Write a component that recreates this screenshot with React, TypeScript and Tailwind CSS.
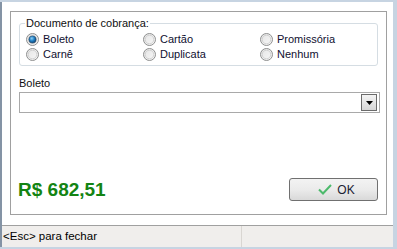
import React from 'react';

const options = [
  { label: 'Boleto', checked: true },
  { label: 'Cartão', checked: false },
  { label: 'Promissória', checked: false },
  { label: 'Carnê', checked: false },
  { label: 'Duplicata', checked: false },
  { label: 'Nenhum', checked: false },
];

function Radio({ checked }: { checked: boolean }) {
  return (
    <svg width="13" height="13" viewBox="0 0 13 13" className="shrink-0">
      <defs>
        <linearGradient id="rb" x1="0" y1="0" x2="1" y2="1">
          <stop offset="0" stopColor="#e4e4e4" />
          <stop offset="1" stopColor="#f8f8f8" />
        </linearGradient>
        <radialGradient id="rc" cx="0.4" cy="0.35" r="0.7">
          <stop offset="0" stopColor="#8fd0f5" />
          <stop offset="0.5" stopColor="#1f7fc4" />
          <stop offset="1" stopColor="#0b3f70" />
        </radialGradient>
      </defs>
      <circle cx="6.5" cy="6.5" r="6" fill="url(#rb)" stroke="#8e8f8f" strokeWidth="1" />
      <circle cx="6.5" cy="6.5" r="4.3" fill="none" stroke="#c9c9c9" strokeWidth="0.8" />
      {checked && <circle cx="6.5" cy="6.5" r="3.6" fill="url(#rc)" stroke="#1c3f61" strokeWidth="0.6" />}
    </svg>
  );
}

export default function App() {
  return (
    <div className="w-[397px] h-[249px] bg-[#c7d4e2] pt-[2px] pr-[4px] pb-[2px] flex flex-col font-['Liberation_Sans',Arial,sans-serif] text-[11px] text-black">
      <div className="flex-1 flex flex-col bg-white border-l-2 border-[#8493a5]">
        {/* main area */}
        <div className="px-[8px] pt-[9px] pb-[10px]">
          <div className="h-[204px] w-[377px] border border-[#a0a0a0] flex flex-col px-[8px]">
            <fieldset className="mt-[5px] border border-[#d5dde3] rounded-[3px] pb-[3px]">
              <legend className="ml-[5px] px-[1px] leading-[13px] text-[#101010]">Documento de cobrança:</legend>
              <div className="grid grid-cols-[117px_117px_1fr] pl-[6px] pt-[2px]">
                {options.map((o) => (
                  <label key={o.label} className="flex items-center gap-[4px] h-[15px] leading-[13px] text-[#101030]">
                    <Radio checked={o.checked} />
                    <span>{o.label}</span>
                  </label>
                ))}
              </div>
            </fieldset>

            <div className="mt-[11px] leading-[13px] text-[#101010]">Boleto</div>
            <div className="mt-[2px] h-[21px] w-[361px] border border-[#a9a9a9] flex items-center justify-end pr-[2px]">
              <div className="w-[16px] h-[17px] border border-[#6b6b6b] bg-gradient-to-b from-[#f4f4f4] to-[#d6d6d6] flex items-center justify-center">
                <svg width="7" height="4" viewBox="0 0 7 4">
                  <path d="M0 0h7L3.5 4z" fill="#000" />
                </svg>
              </div>
            </div>

            <div className="mt-auto mb-[13px] flex items-center justify-between">
              <span className="-ml-px text-[19px] font-bold text-[#138413] leading-none">R$ 682,51</span>
              <button className="w-[89px] h-[23px] rounded-[3px] border border-[#707070] bg-gradient-to-b from-[#f3f3f3] via-[#ebebeb] to-[#d9d9d9] flex items-center justify-center gap-[5px] pl-[6px]">
                <svg width="14" height="11" viewBox="0 0 14 11">
                  <path d="M1 5.5l4 4L13 1" fill="none" stroke="#4dba6c" strokeWidth="2" />
                </svg>
                <span className="text-[12px] text-[#1b2133]">OK</span>
              </button>
            </div>
          </div>
        </div>

        {/* status bar */}
        <div className="h-[22px] border-t border-[#a0a0a0] bg-[#f0eeec] flex">
          <div className="w-[239px] pl-[1px] flex items-center text-[11.5px] text-black">&lt;Esc&gt; para fechar</div>
          <div className="flex-1 border-l border-[#d9d6d2]" />
        </div>
      </div>
    </div>
  );
}
